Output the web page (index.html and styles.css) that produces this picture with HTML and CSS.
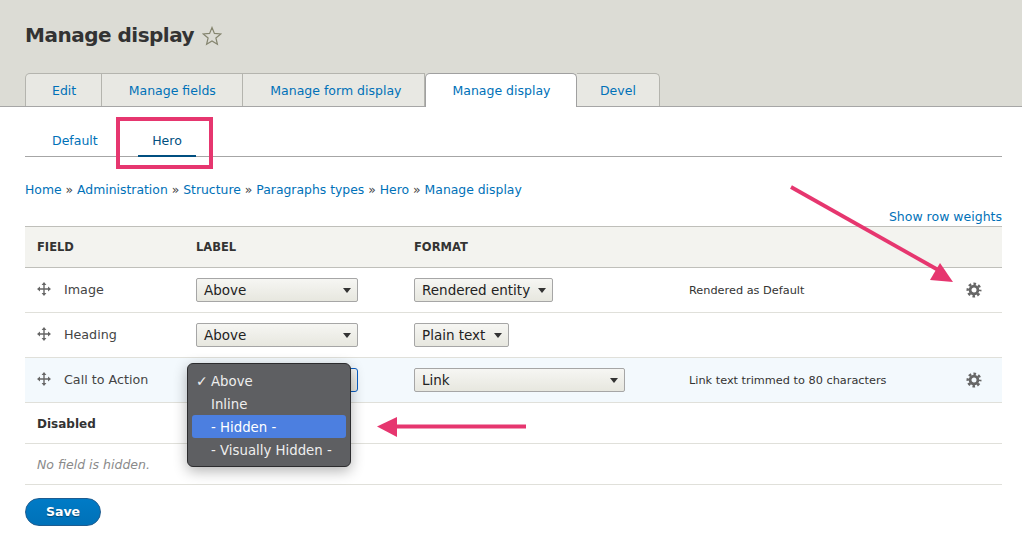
FILE: index.html
```html
<!DOCTYPE html>
<html lang="en">
<head>
  <meta charset="UTF-8">
  <title>Manage display</title>
  <link rel="stylesheet" href="styles.css">
</head>
<body>

<header class="page-head">
  <h1>Manage display
    <svg class="star" width="20" height="20" viewBox="0 0 20 20"><polygon points="10,1.5 12.4,7.4 18.8,7.9 13.9,12 15.4,18.3 10,14.9 4.6,18.3 6.1,12 1.2,7.9 7.6,7.4"/></svg>
  </h1>
  <ul class="tabs">
    <li class="tab-edit"><a href="#">Edit</a></li>
    <li class="tab-fields"><a href="#">Manage fields</a></li>
    <li class="tab-form"><a href="#">Manage form display</a></li>
    <li class="active"><a href="#">Manage display</a></li>
    <li class="tab-devel"><a href="#">Devel</a></li>
  </ul>
</header>

<main class="content">
  <ul class="subtabs">
    <li><a href="#">Default</a></li>
    <li class="active"><a href="#">Hero</a></li>
  </ul>

  <nav class="breadcrumb">
    <a href="#">Home</a> » <a href="#">Administration</a> » <a href="#">Structure</a> » <a href="#">Paragraphs types</a> » <a href="#">Hero</a> » <a href="#">Manage display</a>
  </nav>

  <div class="weights"><a href="#">Show row weights</a></div>

  <table class="fields">
    <thead>
      <tr><th class="col-field">Field</th><th class="col-label">Label</th><th class="col-format">Format</th><th class="col-summary"></th><th></th></tr>
    </thead>
    <tbody>
      <tr>
        <td><span class="field-name"><svg class="drag" width="14" height="14" viewBox="0 0 14 14"><path d="M7 0l2.400 3H4.600zM7 14l2.400-3H4.600zM0 7l3-2.400v4.800zM14 7l-3-2.400v4.800z"/><path d="M6.300 2h1.400v4.300H12v1.400H7.700V12H6.300V7.700H2V6.300h4.300z"/></svg>Image</span></td>
        <td><div class="select select-label">Above</div></td>
        <td><div class="select select-entity">Rendered entity</div></td>
        <td class="summary">Rendered as Default</td>
        <td class="gear-cell"><svg class="gear" width="16" height="16" viewBox="0 0 16 16"><circle cx="8" cy="8" r="3.900"/><circle class="teeth" cx="8" cy="8" r="6.200"/></svg></td>
      </tr>
      <tr>
        <td><span class="field-name"><svg class="drag" width="14" height="14" viewBox="0 0 14 14"><path d="M7 0l2.400 3H4.600zM7 14l2.400-3H4.600zM0 7l3-2.400v4.800zM14 7l-3-2.400v4.800z"/><path d="M6.300 2h1.400v4.300H12v1.400H7.700V12H6.300V7.700H2V6.300h4.300z"/></svg>Heading</span></td>
        <td><div class="select select-label">Above</div></td>
        <td><div class="select select-plain">Plain text</div></td>
        <td></td>
        <td></td>
      </tr>
      <tr class="drag-row">
        <td><span class="field-name"><svg class="drag" width="14" height="14" viewBox="0 0 14 14"><path d="M7 0l2.400 3H4.600zM7 14l2.400-3H4.600zM0 7l3-2.400v4.800zM14 7l-3-2.400v4.800z"/><path d="M6.300 2h1.400v4.300H12v1.400H7.700V12H6.300V7.700H2V6.300h4.300z"/></svg>Call to Action</span></td>
        <td>
          <div class="select select-label focused">
            <ul class="menu">
              <li class="checked">Above</li>
              <li>Inline</li>
              <li class="selected">- Hidden -</li>
              <li>- Visually Hidden -</li>
            </ul>
          </div>
        </td>
        <td><div class="select select-link">Link</div></td>
        <td class="summary">Link text trimmed to 80 characters</td>
        <td class="gear-cell"><svg class="gear" width="16" height="16" viewBox="0 0 16 16"><circle cx="8" cy="8" r="3.900"/><circle class="teeth" cx="8" cy="8" r="6.200"/></svg></td>
      </tr>
      <tr class="region">
        <td colspan="5">Disabled</td>
      </tr>
      <tr class="empty">
        <td colspan="5">No field is hidden.</td>
      </tr>
    </tbody>
  </table>

  <button class="save" type="button">Save</button>
</main>

<!-- annotations drawn on top of the screenshot -->
<div class="mark-box"></div>
<svg class="arrows" width="1022" height="550" viewBox="0 0 1022 550">
  <line x1="791" y1="187" x2="940" y2="271"/>
  <polygon points="940,263 930,280 953,282"/>
  <line x1="526" y1="426.500" x2="395" y2="426.500"/>
  <polygon points="377,426.500 397,417 397,437"/>
</svg>

</body>
</html>
```

FILE: styles.css
```css
body {
  margin: 0;
  background: #fff;
  color: #333;
  font-family: "DejaVu Sans", sans-serif;
  font-size: 12.500px;
  height: 550px;
  overflow: hidden;
  position: relative;
}
a {
  color: #0071b8;
  text-decoration: none;
}
ul {
  list-style: none;
  margin: 0;
  padding: 0;
}

.page-head {
  background: #dcdcd5;
  border-bottom: 1px solid #a6a6a6;
  height: 106px;
  padding-left: 25px;
  display: flex;
  flex-direction: column;
  justify-content: flex-end;
}
.page-head h1 {
  margin: 0 0 24px;
  font-size: 20px;
  letter-spacing: -0.500px;
  font-weight: bold;
  line-height: 27px;
  display: flex;
  align-items: center;
  gap: 8px;
}
.star {
  fill: none;
  stroke: #85856f;
  stroke-width: 1.200;
}
.tabs {
  display: flex;
  height: 33px;
}
.tabs li {
  background: #e8e8e3;
  border: 1px solid #b4b4ae;
  border-bottom: none;
  border-left: none;
  line-height: 33px;
  padding: 0 26px;
}
.tabs .tab-edit {
  border-left: 1px solid #b4b4ae;
  border-top-left-radius: 5px;
  padding-right: 25px;
}
.tabs .tab-fields {
  padding: 0 26.500px;
}
.tabs .tab-form {
  padding: 0 23px 0 27px;
}
.tabs .tab-devel {
  border-top-right-radius: 5px;
  padding: 0 23px;
}
.tabs li.active {
  background: #fff;
  border-color: #a0a0a0;
  border-left: 1px solid #a0a0a0;
  border-radius: 5px 5px 0 0;
  margin-bottom: -1px;
  padding: 0 25.500px 0 26px;
  position: relative;
}

.content {
  padding: 0 20px 0 25px;
}
.subtabs {
  display: flex;
  height: 49px;
  border-bottom: 1px solid #a6a6a6;
  padding-left: 12px;
  align-items: flex-end;
}
.subtabs li {
  padding: 0 14.500px;
  line-height: 36px;
  height: 34px;
  margin-right: 25px;
  margin-bottom: -1px;
  border-bottom: 2px solid transparent;
  box-sizing: border-box;
}
.subtabs li:first-child {
  padding: 0 15px;
}
.subtabs .active {
  border-bottom-color: #004f80;
}
.subtabs .active a {
  color: #004f80;
}

.breadcrumb {
  margin-top: 24px;
  line-height: 17px;
  font-size: 12.400px;
  color: #444;
}
.weights {
  text-align: right;
  margin-top: 10px;
  line-height: 17px;
}

.fields {
  width: 977px;
  margin-top: 1px;
  border-collapse: collapse;
  table-layout: fixed;
}
.fields th {
  background: #f3f3ef;
  border-top: 1px solid #bfbfba;
  border-bottom: 1px solid #bfbfba;
  height: 40px;
  padding: 0 12px;
  text-align: left;
  text-transform: uppercase;
  font-size: 11.500px;
  color: #333;
}
.col-field {
  width: 135px;
}
.col-label {
  width: 194px;
}
.col-format {
  width: 251px;
}
.col-summary {
  width: 245px;
}
.fields td {
  height: 44px;
  padding: 0 12px;
  border-bottom: 1px solid #e0e0da;
}
.drag-row td {
  background: #f3f9fd;
}
.field-name {
  display: flex;
  align-items: center;
  gap: 13px;
  margin-top: -2px;
  color: #444;
  font-size: 12.700px;
}
.drag {
  fill: #666;
}
.fields .summary {
  font-size: 11.300px;
  color: #333;
}
.gear-cell {
  text-align: center;
}
.gear {
  display: block;
  margin: 0 auto;
  fill: none;
  stroke: #666;
}
.gear circle {
  stroke-width: 2.800;
}
.gear .teeth {
  stroke-width: 2.600;
  stroke-dasharray: 2.600 2.270;
  stroke-dashoffset: 1.300;
}

.select {
  box-sizing: border-box;
  height: 24px;
  line-height: 22px;
  padding: 0 7px;
  background: linear-gradient(#f6f6f3, #e7e7df);
  border: 1px solid #a6a6a6;
  border-radius: 2px;
  font-size: 13.500px;
  color: #222;
  position: relative;
}
.select::after {
  content: "";
  position: absolute;
  right: 6px;
  top: 9px;
  border-left: 4px solid transparent;
  border-right: 4px solid transparent;
  border-top: 5px solid #333;
}
.select-label {
  width: 162px;
}
.select-entity {
  width: 139px;
}
.select-plain {
  width: 95px;
}
.select-link {
  width: 211px;
}
.focused {
  border: 1px solid #0a5fc4;
  border-radius: 3px;
}

.menu {
  position: absolute;
  left: -10px;
  top: -6px;
  width: 164px;
  height: 104px;
  box-sizing: border-box;
  padding: 5px 4px;
  background: #5e5f62;
  border: 1px solid #2c2c2e;
  border-radius: 6px;
  box-shadow: 0 4px 14px rgba(0, 0, 0, 0.3);
  color: #eee;
  font-size: 13.300px;
  z-index: 2;
}
.menu li {
  height: 23px;
  line-height: 25px;
  padding-left: 19px;
  border-radius: 3px;
  position: relative;
}
.menu .checked::before {
  content: "✓";
  position: absolute;
  left: 4px;
  font-size: 14px;
}
.menu .selected {
  background: #4c7fe0;
  color: #fff;
}

.fields .region td {
  height: 38px;
  padding-top: 2px;
  font-weight: bold;
  font-size: 12px;
}
.empty td {
  height: 40px;
  font-style: italic;
  color: #8a8a8a;
}

.save {
  display: block;
  margin-top: 13px;
  padding: 0 0 2px;
  width: 76px;
  height: 28px;
  border: 1px solid #1e5c90;
  border-radius: 20px;
  background: linear-gradient(#007bc6, #0071b8);
  color: #fff;
  font-family: inherit;
  font-size: 12.500px;
  font-weight: bold;
  text-shadow: 0 1px 1px rgba(0, 0, 0, 0.4);
}

.mark-box {
  position: absolute;
  left: 116px;
  top: 117px;
  width: 97px;
  height: 52px;
  box-sizing: border-box;
  border: 4px solid #e6366f;
}
.arrows {
  position: absolute;
  left: 0;
  top: 0;
  z-index: 3;
}
.arrows line {
  stroke: #e6366f;
  stroke-width: 3.800;
}
.arrows polygon {
  fill: #e6366f;
}
```
